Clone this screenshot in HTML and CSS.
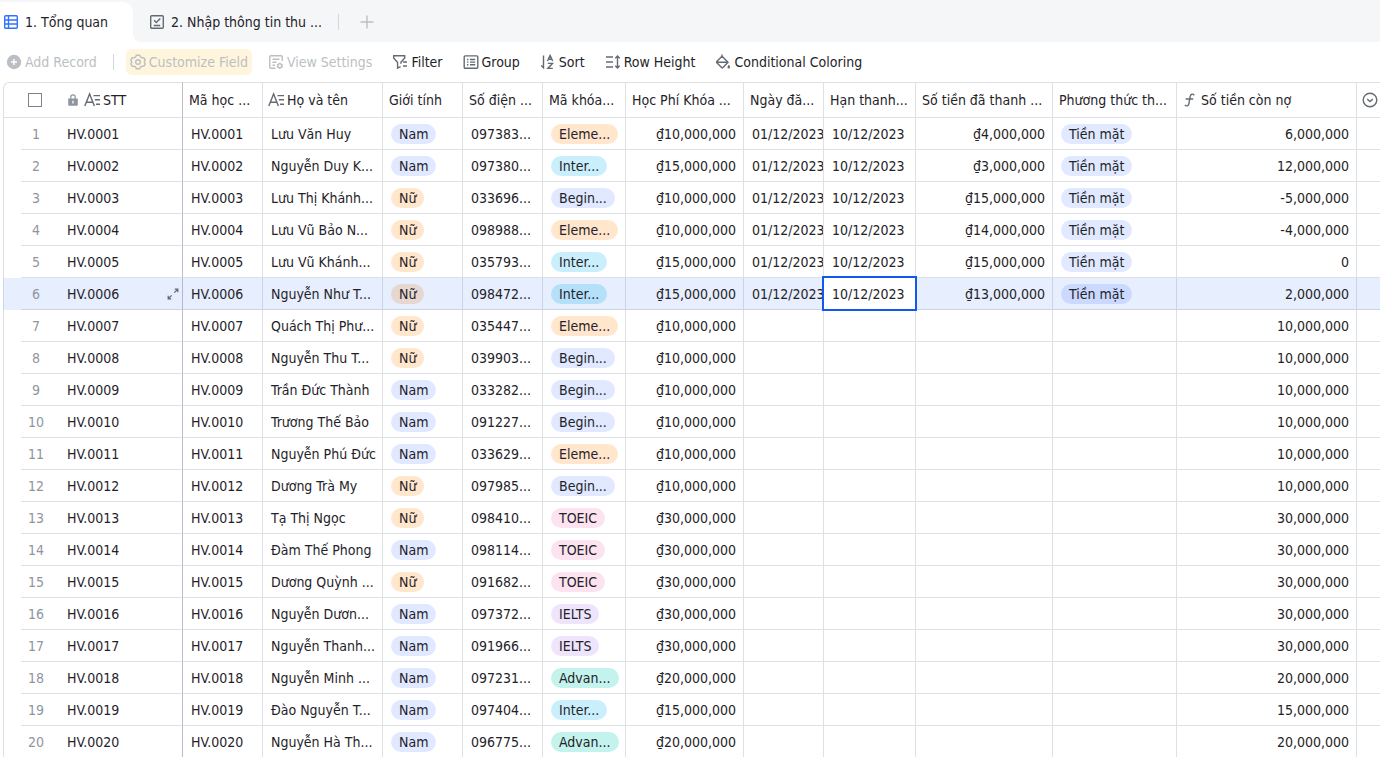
FILE: index.html
```html
<!DOCTYPE html>
<html lang="vi">
<head>
  <meta charset="UTF-8">
  <meta name="viewport" content="width=device-width, initial-scale=1.0">
  <title>Tổng quan</title>
  <link rel="stylesheet" href="styles.css">
</head>
<body>
  <nav class="tabs">
    <div class="tab-slot">
      <a class="tab active" href="#">
        <svg class="icon tab-icon-blue" viewBox="0 0 16 16"><rect x="1.7" y="1.7" width="12.6" height="12.6" rx="1"/><path d="M5.5 2v12M1.7 6h12.6M1.7 10h12.6"/></svg>
        1. Tổng quan
      </a>
    </div>
    <div class="tab-rest">
      <a class="tab" href="#">
        <svg class="icon" viewBox="0 0 16 16"><rect x="1.7" y="1.7" width="12.6" height="12.6" rx="1"/><path d="M5 6.2l2.3 2.3 4-4M4.8 11.5h6.4"/></svg>
        2. Nhập thông tin thu ...
      </a>
      <span class="divider"></span>
      <button class="add-tab" aria-label="Add view">
        <svg class="icon" viewBox="0 0 16 16"><path d="M8 1.5v13M1.5 8h13"/></svg>
      </button>
    </div>
  </nav>

  <div class="toolbar">
    <button disabled>
      <svg class="icon" viewBox="0 0 16 16"><circle cx="8" cy="8" r="7.2" fill="currentColor" stroke="none"/><path d="M8 5v6M5 8h6" stroke="#fff"/></svg>
      Add Record
    </button>
    <span class="divider"></span>
    <button class="highlight" disabled>
      <svg class="icon" viewBox="0 0 16 16"><path d="M6.4 1.2h3.2l.9 1.8 1.3.7 2-.1 1.4 2.5-1 1.9 1 1.9-1.4 2.5-2-.1-1.3.7-.9 1.8H6.4L5.5 13l-1.3-.7-2 .1L.8 9.9l1-1.9-1-1.9 1.4-2.5 2 .1L5.5 3z"/><circle cx="8" cy="8" r="2.3"/></svg>
      Customize Field
    </button>
    <button disabled>
      <svg class="icon" viewBox="0 0 16 16"><path d="M14.2 7V2.7a1 1 0 0 0-1-1H2.8a1 1 0 0 0-1 1v10.6a1 1 0 0 0 1 1H7.5M4.5 5.2h7M4.5 8.2h4M4.5 11.2h2.5"/><circle cx="11.8" cy="11.8" r="2"/><path d="M11.8 8.7v1M11.8 14v1M9.1 10.3l.9.5M13.6 12.8l.9.5M9.1 13.3l.9-.5M13.6 10.8l.9-.5"/></svg>
      View Settings
    </button>
    <button>
      <svg class="icon" viewBox="0 0 16 16"><path d="M8.6 12.7l-3 1.5V8.5L1.7 4V1.8h11V4L8.9 8.3v1.5M11 8h4M11 12h4"/></svg>
      Filter
    </button>
    <button>
      <svg class="icon" viewBox="0 0 16 16"><rect x="1.2" y="1.9" width="13.6" height="12.4" rx="1"/><path d="M4 5.5h1.4M7 5.5h5.2M4 8.1h1.4M7 8.1h5.2M4 10.7h1.4M7 10.7h5.2"/></svg>
      Group
    </button>
    <button>
      <svg class="icon" viewBox="0 0 16 16"><path d="M3.5 1.5v12.2L1.3 11.4M7.5 7l2.6-5.6L12.7 7M8.4 5.2h3.4M7.8 9.4h4.7l-4.7 5h5"/></svg>
      Sort
    </button>
    <button>
      <svg class="icon" viewBox="0 0 16 16"><path d="M1 3h7M1 8h7M1 13h7M12.5 2v12M10.3 4.2L12.5 2l2.2 2.2M10.3 11.8l2.2 2.2 2.2-2.2"/></svg>
      Row Height
    </button>
    <button>
      <svg class="icon" viewBox="0 0 16 16"><path d="M7 2.3l6 6-5 5.2a1 1 0 0 1-1.4 0L1.8 8.7a1 1 0 0 1 0-1.2L7 2.3zM7 2.5V.6M2 8.3h11"/><path d="M13.8 10.8c.9 1.2 1.3 1.8 1.3 2.4a1.3 1.3 0 0 1-2.6 0c0-.6.4-1.2 1.3-2.4z" fill="currentColor" stroke="none"/></svg>
      Conditional Coloring
    </button>
  </div>

  <main class="grid">
    <table>
      <colgroup>
        <col class="w-gutter"><col class="w-num"><col class="w-stt"><col class="w-80"><col class="w-name">
        <col class="w-80"><col class="w-80"><col class="w-course"><col class="w-fee"><col class="w-80">
        <col class="w-due"><col class="w-paid"><col class="w-method"><col class="w-debt"><col>
      </colgroup>
      <thead>
        <tr>
          <th class="gutter"></th>
          <th class="num"><input type="checkbox" aria-label="Select all"></th>
          <th class="stt"><div class="field">
            <svg class="lock" viewBox="0 0 12 16"><path d="M3.8 7V5a2.2 2.2 0 0 1 4.4 0v2" fill="none" stroke="currentColor" stroke-width="1.2"/><path d="M1.2 6.5h9.6v6.3a1 1 0 0 1-1 1H2.2a1 1 0 0 1-1-1z" fill="currentColor"/><path d="M6 8.8v2.6" stroke="#fff" stroke-width="1.3"/></svg>
            <svg class="icon" viewBox="0 0 16 16"><path d="M.8 14L5.6 2l4.8 12M2.4 10.2h6.4M9.5 3.6H16M10.8 7.8H16M12 12.2h4"/></svg>
            STT</div></th>
          <th>Mã học ...</th>
          <th class="with-icon"><div class="field">
            <svg class="icon" viewBox="0 0 16 16"><path d="M.8 14L5.6 2l4.8 12M2.4 10.2h6.4M9.5 3.6H16M10.8 7.8H16M12 12.2h4"/></svg>
            Họ và tên</div></th>
          <th>Giới tính</th>
          <th>Số điện ...</th>
          <th>Mã khóa...</th>
          <th>Học Phí Khóa ...</th>
          <th>Ngày đă...</th>
          <th>Hạn thanh...</th>
          <th>Số tiền đã thanh ...</th>
          <th>Phương thức th...</th>
          <th class="with-icon"><div class="field">
            <svg class="icon" viewBox="0 0 16 16"><path d="M12.3 3.2C10.6 1.4 8.6 2 8.2 4.4L6.9 11.6C6.5 14 4.4 14.6 2.8 13M3.6 7h7.6"/></svg>
            Số tiền còn nợ</div></th>
          <th class="last with-icon"><button class="more" aria-label="More fields">
            <svg class="icon" viewBox="0 0 16 16"><circle cx="8" cy="8" r="6.8"/><path d="M5.2 7L8 9.6 10.8 7"/></svg>
          </button></th>
        </tr>
      </thead>
      <tbody>
        <tr>
          <td class="gutter"></td><td class="num">1</td><td class="stt">HV.0001</td><td>HV.0001</td><td>Lưu Văn Huy</td>
          <td><span class="tag blue">Nam</span></td><td>097383...</td><td><span class="tag orange">Eleme...</span></td><td class="money">₫10,000,000</td>
          <td>01/12/2023</td><td>10/12/2023</td><td class="money">₫4,000,000</td><td><span class="tag blue">Tiền mặt</span></td><td class="money">6,000,000</td><td class="last"></td>
        </tr>
        <tr>
          <td class="gutter"></td><td class="num">2</td><td class="stt">HV.0002</td><td>HV.0002</td><td>Nguyễn Duy K...</td>
          <td><span class="tag blue">Nam</span></td><td>097380...</td><td><span class="tag cyan">Inter...</span></td><td class="money">₫15,000,000</td>
          <td>01/12/2023</td><td>10/12/2023</td><td class="money">₫3,000,000</td><td><span class="tag blue">Tiền mặt</span></td><td class="money">12,000,000</td><td class="last"></td>
        </tr>
        <tr>
          <td class="gutter"></td><td class="num">3</td><td class="stt">HV.0003</td><td>HV.0003</td><td>Lưu Thị Khánh...</td>
          <td><span class="tag orange">Nữ</span></td><td>033696...</td><td><span class="tag blue">Begin...</span></td><td class="money">₫10,000,000</td>
          <td>01/12/2023</td><td>10/12/2023</td><td class="money">₫15,000,000</td><td><span class="tag blue">Tiền mặt</span></td><td class="money">-5,000,000</td><td class="last"></td>
        </tr>
        <tr>
          <td class="gutter"></td><td class="num">4</td><td class="stt">HV.0004</td><td>HV.0004</td><td>Lưu Vũ Bảo N...</td>
          <td><span class="tag orange">Nữ</span></td><td>098988...</td><td><span class="tag orange">Eleme...</span></td><td class="money">₫10,000,000</td>
          <td>01/12/2023</td><td>10/12/2023</td><td class="money">₫14,000,000</td><td><span class="tag blue">Tiền mặt</span></td><td class="money">-4,000,000</td><td class="last"></td>
        </tr>
        <tr>
          <td class="gutter"></td><td class="num">5</td><td class="stt">HV.0005</td><td>HV.0005</td><td>Lưu Vũ Khánh...</td>
          <td><span class="tag orange">Nữ</span></td><td>035793...</td><td><span class="tag cyan">Inter...</span></td><td class="money">₫15,000,000</td>
          <td>01/12/2023</td><td>10/12/2023</td><td class="money">₫15,000,000</td><td><span class="tag blue">Tiền mặt</span></td><td class="money">0</td><td class="last"></td>
        </tr>
        <tr class="selected">
          <td class="gutter"></td><td class="num">6</td>
          <td class="stt"><div class="expandable">HV.0006
            <button class="expand" aria-label="Expand record"><svg class="icon" viewBox="0 0 16 16"><path d="M9.5 6.5L13.2 2.8M10 2.5h3.5V6M6.5 9.5l-3.7 3.7M2.5 10v3.5H6"/></svg></button></div></td>
          <td>HV.0006</td><td>Nguyễn Như T...</td>
          <td><span class="tag orange">Nữ</span></td><td>098472...</td><td><span class="tag cyan">Inter...</span></td><td class="money">₫15,000,000</td>
          <td>01/12/2023</td><td class="current">10/12/2023</td><td class="money">₫13,000,000</td><td><span class="tag blue">Tiền mặt</span></td><td class="money">2,000,000</td><td class="last"></td>
        </tr>
        <tr>
          <td class="gutter"></td><td class="num">7</td><td class="stt">HV.0007</td><td>HV.0007</td><td>Quách Thị Phư...</td>
          <td><span class="tag orange">Nữ</span></td><td>035447...</td><td><span class="tag orange">Eleme...</span></td><td class="money">₫10,000,000</td>
          <td></td><td></td><td></td><td></td><td class="money">10,000,000</td><td class="last"></td>
        </tr>
        <tr>
          <td class="gutter"></td><td class="num">8</td><td class="stt">HV.0008</td><td>HV.0008</td><td>Nguyễn Thu T...</td>
          <td><span class="tag orange">Nữ</span></td><td>039903...</td><td><span class="tag blue">Begin...</span></td><td class="money">₫10,000,000</td>
          <td></td><td></td><td></td><td></td><td class="money">10,000,000</td><td class="last"></td>
        </tr>
        <tr>
          <td class="gutter"></td><td class="num">9</td><td class="stt">HV.0009</td><td>HV.0009</td><td>Trần Đức Thành</td>
          <td><span class="tag blue">Nam</span></td><td>033282...</td><td><span class="tag blue">Begin...</span></td><td class="money">₫10,000,000</td>
          <td></td><td></td><td></td><td></td><td class="money">10,000,000</td><td class="last"></td>
        </tr>
        <tr>
          <td class="gutter"></td><td class="num">10</td><td class="stt">HV.0010</td><td>HV.0010</td><td>Trương Thế Bảo</td>
          <td><span class="tag blue">Nam</span></td><td>091227...</td><td><span class="tag blue">Begin...</span></td><td class="money">₫10,000,000</td>
          <td></td><td></td><td></td><td></td><td class="money">10,000,000</td><td class="last"></td>
        </tr>
        <tr>
          <td class="gutter"></td><td class="num">11</td><td class="stt">HV.0011</td><td>HV.0011</td><td>Nguyễn Phú Đức</td>
          <td><span class="tag blue">Nam</span></td><td>033629...</td><td><span class="tag orange">Eleme...</span></td><td class="money">₫10,000,000</td>
          <td></td><td></td><td></td><td></td><td class="money">10,000,000</td><td class="last"></td>
        </tr>
        <tr>
          <td class="gutter"></td><td class="num">12</td><td class="stt">HV.0012</td><td>HV.0012</td><td>Dương Trà My</td>
          <td><span class="tag orange">Nữ</span></td><td>097985...</td><td><span class="tag blue">Begin...</span></td><td class="money">₫10,000,000</td>
          <td></td><td></td><td></td><td></td><td class="money">10,000,000</td><td class="last"></td>
        </tr>
        <tr>
          <td class="gutter"></td><td class="num">13</td><td class="stt">HV.0013</td><td>HV.0013</td><td>Tạ Thị Ngọc</td>
          <td><span class="tag orange">Nữ</span></td><td>098410...</td><td><span class="tag pink">TOEIC</span></td><td class="money">₫30,000,000</td>
          <td></td><td></td><td></td><td></td><td class="money">30,000,000</td><td class="last"></td>
        </tr>
        <tr>
          <td class="gutter"></td><td class="num">14</td><td class="stt">HV.0014</td><td>HV.0014</td><td>Đàm Thế Phong</td>
          <td><span class="tag blue">Nam</span></td><td>098114...</td><td><span class="tag pink">TOEIC</span></td><td class="money">₫30,000,000</td>
          <td></td><td></td><td></td><td></td><td class="money">30,000,000</td><td class="last"></td>
        </tr>
        <tr>
          <td class="gutter"></td><td class="num">15</td><td class="stt">HV.0015</td><td>HV.0015</td><td>Dương Quỳnh ...</td>
          <td><span class="tag orange">Nữ</span></td><td>091682...</td><td><span class="tag pink">TOEIC</span></td><td class="money">₫30,000,000</td>
          <td></td><td></td><td></td><td></td><td class="money">30,000,000</td><td class="last"></td>
        </tr>
        <tr>
          <td class="gutter"></td><td class="num">16</td><td class="stt">HV.0016</td><td>HV.0016</td><td>Nguyễn Dươn...</td>
          <td><span class="tag blue">Nam</span></td><td>097372...</td><td><span class="tag purple">IELTS</span></td><td class="money">₫30,000,000</td>
          <td></td><td></td><td></td><td></td><td class="money">30,000,000</td><td class="last"></td>
        </tr>
        <tr>
          <td class="gutter"></td><td class="num">17</td><td class="stt">HV.0017</td><td>HV.0017</td><td>Nguyễn Thanh...</td>
          <td><span class="tag blue">Nam</span></td><td>091966...</td><td><span class="tag purple">IELTS</span></td><td class="money">₫30,000,000</td>
          <td></td><td></td><td></td><td></td><td class="money">30,000,000</td><td class="last"></td>
        </tr>
        <tr>
          <td class="gutter"></td><td class="num">18</td><td class="stt">HV.0018</td><td>HV.0018</td><td>Nguyễn Minh ...</td>
          <td><span class="tag blue">Nam</span></td><td>097231...</td><td><span class="tag green">Advan...</span></td><td class="money">₫20,000,000</td>
          <td></td><td></td><td></td><td></td><td class="money">20,000,000</td><td class="last"></td>
        </tr>
        <tr>
          <td class="gutter"></td><td class="num">19</td><td class="stt">HV.0019</td><td>HV.0019</td><td>Đào Nguyễn T...</td>
          <td><span class="tag blue">Nam</span></td><td>097404...</td><td><span class="tag cyan">Inter...</span></td><td class="money">₫15,000,000</td>
          <td></td><td></td><td></td><td></td><td class="money">15,000,000</td><td class="last"></td>
        </tr>
        <tr>
          <td class="gutter"></td><td class="num">20</td><td class="stt">HV.0020</td><td>HV.0020</td><td>Nguyễn Hà Th...</td>
          <td><span class="tag blue">Nam</span></td><td>096775...</td><td><span class="tag green">Advan...</span></td><td class="money">₫20,000,000</td>
          <td></td><td></td><td></td><td></td><td class="money">20,000,000</td><td class="last"></td>
        </tr>
      </tbody>
    </table>
  </main>
</body>
</html>
```
FILE: styles.css
```css
* {
  box-sizing: border-box;
}

body {
  margin: 0;
  height: 100vh;
  display: flex;
  flex-direction: column;
  overflow: hidden;
  font-family: "DejaVu Sans Condensed", "Noto Sans", sans-serif;
  font-size: 14px;
  line-height: 20px;
  color: #1f2329;
  background: #fff;
}

button {
  font: inherit;
  color: inherit;
  background: none;
  border: 0;
  padding: 0;
  cursor: pointer;
}

.icon {
  width: 16px;
  height: 16px;
  flex: none;
  fill: none;
  stroke: currentColor;
  stroke-width: 1.4;
  color: #646a73;
}

.divider {
  width: 1px;
  height: 16px;
  background: #d5d7db;
}

/* view tabs */
.tabs {
  display: flex;
  height: 42px;
  flex: none;
}

.tab-slot {
  display: flex;
  padding-top: 2px;
  background: #f5f6f8;
}

.tab {
  display: flex;
  align-items: center;
  gap: 6px;
  color: inherit;
  text-decoration: none;
  white-space: nowrap;
}

.tab.active {
  width: 133px;
  padding-left: 3px;
  background: #fff;
  border-radius: 0 10px 0 0;
}

.tab .tab-icon-blue {
  color: #3370ff;
}

.tab-rest {
  flex: 1;
  display: flex;
  align-items: center;
  gap: 16px;
  padding: 2px 0 0 16px;
  background: #f5f6f8;
  border-radius: 0 0 0 8px;
}

.add-tab {
  display: flex;
  margin-left: 4px;
}

.add-tab .icon {
  color: #bbbfc4;
}

/* toolbar */
.toolbar {
  display: flex;
  align-items: center;
  gap: 12px;
  flex: none;
  height: 40px;
  padding-left: 2px;
}

.toolbar button {
  display: flex;
  align-items: center;
  gap: 3px;
  height: 26px;
  padding: 0 4px;
  border-radius: 6px;
  white-space: nowrap;
}

.toolbar button:disabled,
.toolbar button:disabled .icon {
  color: #bbbfc4;
}

.toolbar .highlight {
  background: #fff5dc;
}

/* data grid */
.grid {
  flex: 1;
  min-height: 0;
  overflow: hidden;
  padding-left: 3px;
}

table {
  width: 100%;
  table-layout: fixed;
  border-collapse: separate;
  border-spacing: 0;
}

.w-gutter { width: 18px; }
.w-num { width: 30px; }
.w-stt { width: 132px; }
.w-80 { width: 80px; }
.w-name { width: 120px; }
.w-course { width: 83px; }
.w-fee { width: 118px; }
.w-due { width: 92px; }
.w-paid { width: 137px; }
.w-method { width: 124px; }
.w-debt { width: 180px; }

th,
td {
  border: 0 solid #dee0e3;
  border-width: 0 1px 1px 0;
  text-align: left;
  font-weight: normal;
  white-space: nowrap;
  overflow: hidden;
  vertical-align: top;
}

th {
  border-top-width: 1px;
  padding: 7px 6px;
}

th.with-icon {
  padding-left: 5px;
}

td {
  padding: 6px 8px 5px;
}

th.gutter,
td.gutter {
  border-left-width: 1px;
  border-right-width: 0;
  padding: 0;
}

th.gutter {
  border-top-left-radius: 6px;
}

td.gutter {
  border-bottom-width: 0;
}

th.num,
td.num {
  border-right-width: 0;
  padding-left: 0;
  padding-right: 0;
  text-align: center;
  color: #8f959e;
}

th.stt,
td.stt {
  padding-left: 16px;
  border-right-color: #bbbcc6;
}

td.stt {
  padding-right: 2px;
}

th.last,
td.last {
  border-right-width: 0;
}

td.money {
  padding-right: 7px;
  text-align: right;
}

input[type="checkbox"] {
  appearance: none;
  display: block;
  width: 14px;
  height: 14px;
  margin: 3px 7px;
  border: 1px solid #7d838d;
}

.field {
  display: flex;
  align-items: center;
  gap: 3px;
}

.lock {
  width: 12px;
  height: 16px;
  margin-right: 2px;
  color: #8f959e;
}

.more {
  display: flex;
  margin-top: 2px;
}

.tag {
  display: block;
  width: fit-content;
  padding: 0 8px;
  border-radius: 10px;
}

.blue { background: #e0e9ff; }
.orange { background: #ffe6cc; }
.cyan { background: #caeffc; }
.pink { background: #fde2f0; }
.purple { background: #eee5fd; }
.green { background: #c4f2ec; }

/* selected record */
.selected td {
  background: #e7eefd;
  border-color: #c9d4e8;
}

.selected td.stt {
  border-right-color: #b3b9cb;
}

.selected td.gutter {
  border-left-color: #cdd7ea;
}

.selected .blue { background: #cad9fd; }
.selected .orange { background: #e6d7d0; }
.selected .cyan { background: #b5e0fa; }

.expandable {
  display: flex;
  align-items: center;
  justify-content: space-between;
}

.expand {
  display: flex;
}

.expand .icon {
  width: 14px;
  height: 14px;
}

.selected td.current {
  position: relative;
  overflow: visible;
  background: #fff;
}

.current::after {
  content: "";
  position: absolute;
  inset: -2px;
  border: 2px solid #1456f0;
  pointer-events: none;
}
```
